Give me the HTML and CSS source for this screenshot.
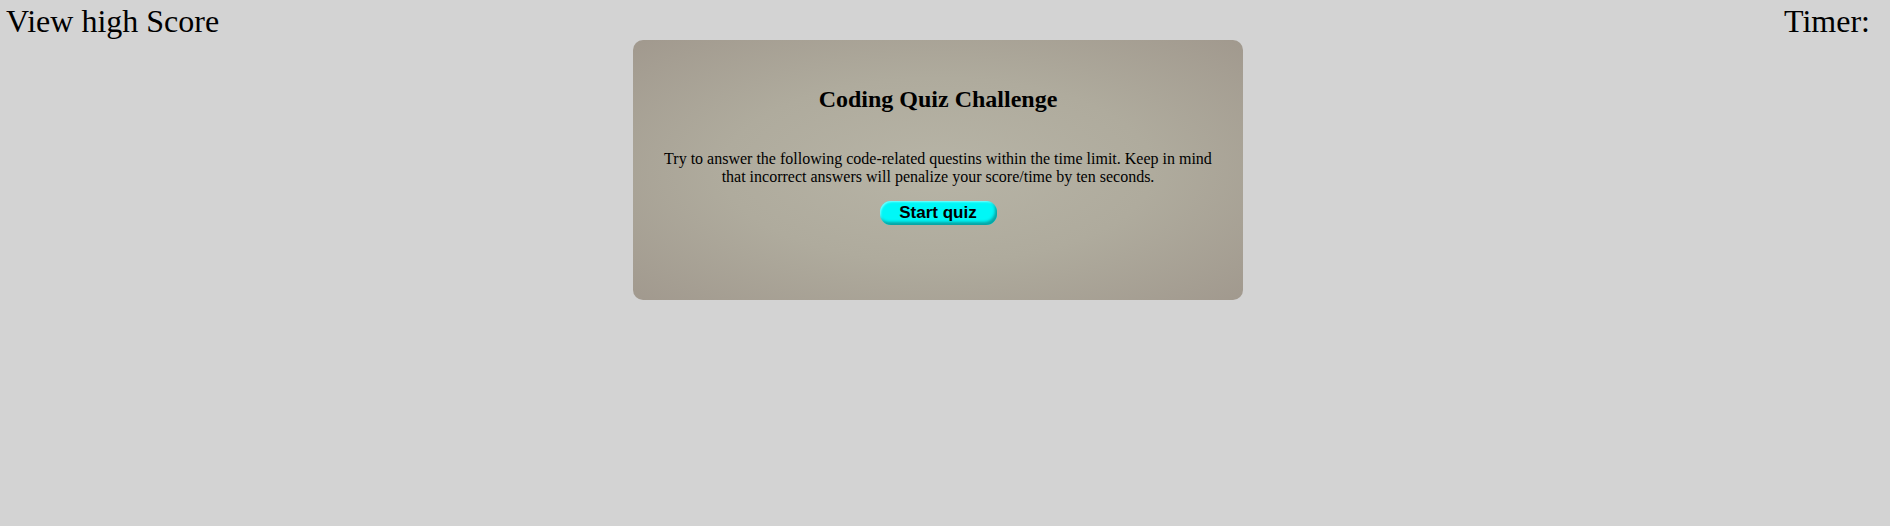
FILE: index.html
```html
<!DOCTYPE html>
<html lang="en">
<head>
<meta charset="utf-8">
<title>Coding Quiz</title>
<link rel="stylesheet" href="styles.css">
</head>
<body>
  <header class="topbar">
    <a class="highscore">View high Score</a>
    <div class="timer">Timer:</div>
  </header>
  <main class="stage">
    <section class="card">
      <h2 class="title">Coding Quiz Challenge</h2>
      <p class="intro">Try to answer the following code-related questins within the time limit. Keep in mind that incorrect answers will penalize your score/time by ten seconds.</p>
      <button class="start">Start quiz</button>
    </section>
  </main>
</body>
</html>
```
FILE: styles.css
```css
html, body {
  margin: 0;
  padding: 0;
}
body {
  background: #d3d3d3;
  font-family: "Liberation Serif", "Times New Roman", serif;
  color: #000;
  width: 1890px;
  height: 526px;
}
.topbar {
  display: flex;
  justify-content: space-between;
  align-items: flex-start;
  padding: 3px 20px 0 6px;
  font-size: 32px;
  line-height: 37px;
  height: 37px;
}
.highscore {
  color: #000;
  text-decoration: none;
}
.stage {
  display: flex;
  justify-content: center;
  padding-right: 14px;
}
.card {
  width: 610px;
  height: 260px;
  box-sizing: border-box;
  padding: 0 20px;
  border-radius: 10px;
  background: radial-gradient(ellipse at center, #b7b4a6 0%, #afab9d 50%, #a1998e 100%);
  display: flex;
  flex-direction: column;
  align-items: center;
  text-align: center;
}
.title {
  margin: 45px 0 0;
  font-size: 24px;
  font-weight: bold;
  line-height: 28px;
}
.intro {
  margin: 37px 0 0;
  font-size: 16px;
  line-height: 18px;
}
.start {
  margin-top: 15px;
  width: 117px;
  height: 24px;
  padding: 0;
  border: none;
  border-radius: 11px;
  background: #00f7f7;
  box-shadow: inset -2px -3px 3px #08a3a3, inset 1px 1px 2px #7fffff;
  font-family: "Liberation Sans", Arial, sans-serif;
  font-weight: bold;
  font-size: 17px;
  line-height: 24px;
  color: #000;
}
```
